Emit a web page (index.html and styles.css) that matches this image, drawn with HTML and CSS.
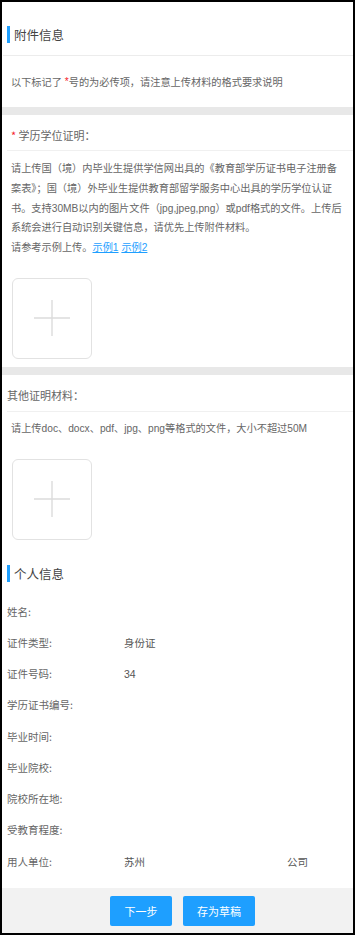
FILE: index.html
```html
<!DOCTYPE html>
<html lang="zh-CN">
<head>
<meta charset="utf-8">
<title>附件信息</title>
<link rel="stylesheet" href="styles.css">
</head>
<body>
<div class="page">
  <main class="content">
    <div class="sec-title"><span class="bar"></span><span class="title-text">附件信息</span></div>
    <div class="notice">以下标记了 <span class="req">*</span>号的为必传项，请注意上传材料的格式要求说明</div>
    <div class="gap"></div>
    <section class="upload-sec">
      <div class="field-label first"><span class="req">*</span> 学历学位证明：</div>
      <div class="desc first">请上传国（境）内毕业生提供学信网出具的《教育部学历证书电子注册备案表》；国（境）外毕业生提供教育部留学服务中心出具的学历学位认证书。支持30MB以内的图片文件（jpg,jpeg,png）或pdf格式的文件。上传后系统会进行自动识别关键信息，请优先上传附件材料。<br>请参考示例上传。<a class="link" href="#">示例1</a> <a class="link" href="#">示例2</a></div>
      <div class="uploader first">
        <svg width="38" height="38" viewBox="0 0 38 38"><path d="M19 1V37M1 19H37" stroke="#dcdcdc" stroke-width="1.4" fill="none"/></svg>
      </div>
    </section>
    <div class="gap"></div>
    <section class="upload-sec">
      <div class="field-label second">其他证明材料：</div>
      <div class="desc second">请上传doc、docx、pdf、jpg、png等格式的文件，大小不超过50M</div>
      <div class="uploader second">
        <svg width="38" height="38" viewBox="0 0 38 38"><path d="M19 1V37M1 19H37" stroke="#dcdcdc" stroke-width="1.4" fill="none"/></svg>
      </div>
    </section>
    <div class="sec-title info"><span class="bar"></span><span class="title-text">个人信息</span></div>
    <div class="rows">
      <div class="row"><span class="label">姓名:</span><span class="value"></span></div>
      <div class="row"><span class="label">证件类型:</span><span class="value">身份证</span></div>
      <div class="row"><span class="label">证件号码:</span><span class="value">34</span></div>
      <div class="row"><span class="label">学历证书编号:</span><span class="value"></span></div>
      <div class="row"><span class="label">毕业时间:</span><span class="value"></span></div>
      <div class="row"><span class="label">毕业院校:</span><span class="value"></span></div>
      <div class="row"><span class="label">院校所在地:</span><span class="value"></span></div>
      <div class="row"><span class="label">受教育程度:</span><span class="value"></span></div>
      <div class="row"><span class="label">用人单位:</span><span class="value split"><span>苏州</span><span>公司</span></span></div>
    </div>
  </main>
  <footer class="footer">
    <button class="btn next">下一步</button>
    <button class="btn draft">存为草稿</button>
  </footer>
</div>
</body>
</html>
```
FILE: styles.css
```css
html, body {
  margin: 0;
  padding: 0;
  background: #fff;
}
body {
  font-family: "Liberation Sans", "Noto Sans CJK SC", "Microsoft YaHei", sans-serif;
  color: #666;
}
.page {
  width: 355px;
  height: 935px;
  box-sizing: border-box;
  border: 2px solid #000;
  display: flex;
  flex-direction: column;
  background: #fff;
}
.content {
  flex: 1;
}
.sec-title {
  height: 54px;
  box-sizing: border-box;
  padding-bottom: 12px;
  display: flex;
  align-items: flex-end;
  border-bottom: 1px solid #ececec;
  margin-left: 1px;
}
.sec-title .bar {
  width: 3px;
  height: 17px;
  background: #1e9fff;
  margin-left: 4px;
  flex: none;
}
.sec-title .title-text {
  margin-left: 4px;
  font-family: "Noto Sans CJK SC", sans-serif;
  font-size: 12.5px;
  line-height: 17px;
  color: #444;
}
.sec-title.info {
  height: auto;
  padding: 25px 0 0 0;
  border-bottom: none;
}
.notice {
  height: 51px;
  display: flex;
  align-items: center;
  padding-left: 9px;
  font-size: 10.2px;
  color: #666;
  white-space: pre;
}
.req {
  color: #f5222d;
}
.gap {
  height: 8px;
  background: #e8e8e8;
}
.field-label {
  margin-left: 5px;
  line-height: 20px;
  font-family: "Noto Sans CJK SC", sans-serif;
  font-size: 11px;
  color: #666;
  border-bottom: 1px solid #f0f0f0;
}
.field-label.first {
  padding: 10px 0 5px 4px;
}
.field-label.second {
  padding: 10px 0 6px 0;
}
.desc {
  font-size: 10.2px;
  color: #666;
  padding: 0 6px 0 9px;
}
.desc.first {
  padding-top: 8px;
  line-height: 19.8px;
}
.desc.second {
  padding-top: 7px;
  line-height: 20px;
}
.link {
  color: #1e9fff;
  text-decoration: underline;
}
.uploader {
  width: 80px;
  height: 81px;
  box-sizing: border-box;
  border: 1px solid #e2e2e2;
  border-radius: 6px;
  display: flex;
  align-items: center;
  justify-content: center;
  margin-left: 10px;
  margin-top: 20px;
}
.uploader.first {
  margin-bottom: 8px;
}
.rows {
  margin-top: 13.4px;
}
.row {
  height: 31.25px;
  display: flex;
  align-items: center;
  padding-left: 5px;
  font-size: 10.5px;
}
.row .label {
  width: 117px;
  flex: none;
  color: #666;
  font-family: "Noto Sans CJK SC", sans-serif;
}
.row .value {
  color: #555;
}
.row .value.split {
  width: 184px;
  display: flex;
  justify-content: space-between;
}
.footer {
  height: 45px;
  flex: none;
  background: #f2f2f2;
  display: flex;
  justify-content: center;
  align-items: flex-start;
  padding-top: 8px;
  padding-left: 10px;
  box-sizing: border-box;
  gap: 11px;
}
.btn {
  height: 30px;
  border: none;
  border-radius: 2px;
  background: #1e9fff;
  color: #fff;
  font-family: "Noto Sans CJK SC", sans-serif;
  font-size: 11px;
  padding: 0;
}
.btn.next {
  width: 62px;
}
.btn.draft {
  width: 72px;
}
```
